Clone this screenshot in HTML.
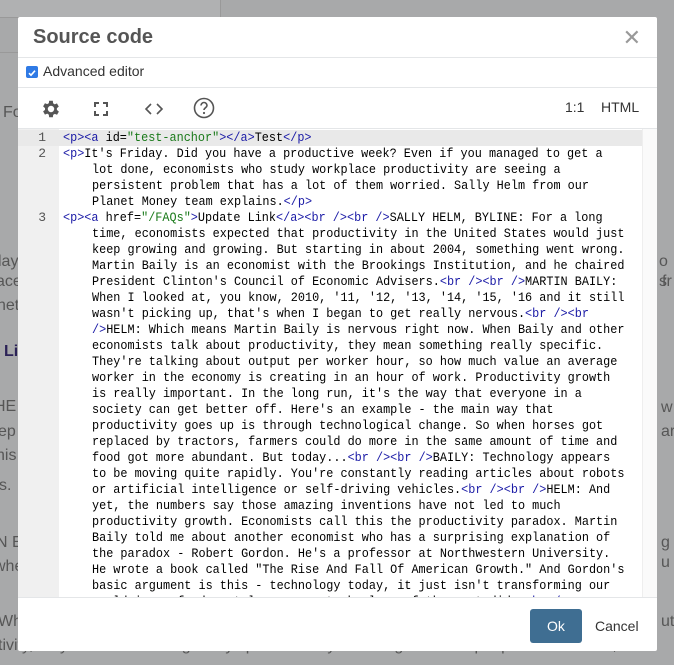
<!DOCTYPE html>
<html><head><meta charset="utf-8"><style>
body{margin:0;width:674px;height:665px;background:#a8a9aa;position:relative;overflow:hidden;font-family:"Liberation Sans",sans-serif}
.bg{position:absolute;color:#565656;font-size:16px;line-height:20px}
.modal{position:absolute;left:18px;top:17px;width:639px;height:634px;background:#fff;border-radius:2px}
.hdr{position:absolute;left:0;top:0;width:100%;height:40px;border-bottom:1px solid #e4e6e8}
.hdr h1{margin:0;position:absolute;left:15px;top:9px;font-size:20px;font-weight:bold;color:#555}
.x{position:absolute;right:16px;top:8px;font-size:22px;color:#999}
.chk{position:absolute;top:41px;left:0;width:100%;height:29px;border-bottom:1px solid #e4e6e8;font-size:14px;color:#333}
.cb{position:absolute;left:8px;top:8px;width:12px;height:12px;background:#2f7ae5;border-radius:2px}
.tb{position:absolute;top:71px;left:0;width:100%;height:40px;border-bottom:1px solid #e4e6e8}
.code{position:absolute;top:112px;left:0;width:639px;height:468px;overflow:hidden;background:#fff}
.gut{position:absolute;left:0;top:0;width:41px;height:100%;background:#f0f0f0}
.sb{position:absolute;right:0;top:0;width:14px;height:100%;background:#fafafa;border-left:1px solid #eee}
.lines{position:absolute;left:0;top:1px;font-family:"Liberation Mono",monospace;font-size:13px;line-height:16px;color:#000;white-space:pre}
.ln{position:absolute;left:0;width:28px;text-align:right;color:#555}
.l,.c{position:absolute;transform:scaleX(0.91);transform-origin:0 0}
.l{left:45px}
.c{left:74px}
.t{color:#1a1aa6}.s{color:#1a7a1a}
.ftr{position:absolute;top:580px;left:0;width:100%;height:54px;border-top:1px solid #e4e6e8}
.ok{position:absolute;left:512px;top:11px;width:52px;height:34px;background:#3f6e92;color:#fff;border-radius:3px;font-size:14px;text-align:center;line-height:34px}
.cancel{position:absolute;left:577px;top:20px;font-size:14px;color:#333}
</style></head><body>
<div style="position:absolute;left:0;top:0;width:220px;height:17px;background:#b0b1b2;border-right:1px solid #999;border-bottom:1px solid #999"></div>
<div style="position:absolute;left:0;top:52px;width:18px;height:1px;background:#999"></div>
<div class="bg" style="left:3px;top:103px">Fo</div>
<div class="bg" style="left:-2px;top:252px">lay</div>
<div class="bg" style="left:-4px;top:272px">ace</div>
<div class="bg" style="left:-3px;top:296px">net</div>
<div class="bg" style="left:4px;top:342px;color:#2b2257;font-weight:bold">Li</div>
<div class="bg" style="left:-6px;top:397px">HE</div>
<div class="bg" style="left:-2px;top:422px">ep</div>
<div class="bg" style="left:-4px;top:446px">his</div>
<div class="bg" style="left:-1px;top:476px">s.</div>
<div class="bg" style="left:-4px;top:533px">N E</div>
<div class="bg" style="left:-6px;top:557px">whe</div>
<div class="bg" style="left:-2px;top:612px">Wh</div>
<div class="bg" style="left:-2px;top:636px">tivity, they mean something really specific. They're talking about output per worker hour, so h</div>
<div class="bg" style="left:659px;top:252px">o s</div>
<div class="bg" style="left:662px;top:272px">fr</div>
<div class="bg" style="left:661px;top:398px">w</div>
<div class="bg" style="left:661px;top:422px">ar</div>
<div class="bg" style="left:661px;top:533px">g u</div>
<div class="bg" style="left:661px;top:612px">ut</div>

<div class="modal">
 <div class="hdr"><h1>Source code</h1><div class="x">✕</div></div>
 <div class="chk"><div class="cb"><svg width="12" height="12" viewBox="0 0 12 12"><path d="M3 6.2l2 2 4-4.5" stroke="#fff" stroke-width="1.6" fill="none"/></svg></div><span style="position:absolute;left:25px;top:5px">Advanced editor</span></div>
 <div class="tb">
  <svg style="position:absolute;left:22px;top:10px" width="22" height="22" viewBox="0 0 24 24"><path fill="#555" d="M19.4 13a7.5 7.5 0 000-2l2.1-1.6-2-3.5-2.5 1a7.6 7.6 0 00-1.7-1L15 3h-4l-.4 2.7a7.6 7.6 0 00-1.7 1l-2.5-1-2 3.5L6.5 11a7.5 7.5 0 000 2l-2.1 1.6 2 3.5 2.5-1a7.6 7.6 0 001.7 1L11 21h4l.4-2.7a7.6 7.6 0 001.7-1l2.5 1 2-3.5zM13 15.5a3.5 3.5 0 110-7 3.5 3.5 0 010 7z" transform="translate(-1 0)"/></svg>
  <svg style="position:absolute;left:75px;top:13px" width="16" height="16" viewBox="0 0 16 16"><path d="M2 6V2h4M10 2h4v4M14 10v4h-4M6 14H2v-4" stroke="#555" stroke-width="2" fill="none"/></svg>
  <svg style="position:absolute;left:126px;top:13px" width="20" height="16" viewBox="0 0 20 16"><path d="M7 3L2 8l5 5M13 3l5 5-5 5" stroke="#555" stroke-width="1.6" fill="none"/></svg>
  <svg style="position:absolute;left:175px;top:9px" width="22" height="22" viewBox="0 0 22 22"><circle cx="11" cy="11" r="9.5" stroke="#555" stroke-width="1.6" fill="none"/><path d="M8 8.5a3 3 0 116 0c0 2-3 2.2-3 4.5" stroke="#555" stroke-width="1.6" fill="none"/><circle cx="11" cy="16" r="1.1" fill="#555"/></svg>
  <span style="position:absolute;left:547px;top:11px;font-size:14px;color:#333">1:1</span>
  <span style="position:absolute;left:583px;top:11px;font-size:14px;color:#333">HTML</span>
 </div>
 <div class="code">
  <div class="gut"></div><div class="sb"></div>
  <div style="position:absolute;left:0;top:1px;width:624px;height:16px;background:#e9e9e9"></div>
  <div class="lines">
<div class="ln" style="top:0">1</div><div class="ln" style="top:16px">2</div><div class="ln" style="top:80px">3</div>
<div class="l" style="top:0"><span class="t">&lt;p&gt;&lt;a</span> id=<span class="s">"test-anchor"</span><span class="t">&gt;&lt;/a&gt;</span>Test<span class="t">&lt;/p&gt;</span></div>
<div class="l" style="top:16px"><span class="t">&lt;p&gt;</span>It's Friday. Did you have a productive week? Even if you managed to get a</div>
<div class="c" style="top:32px">lot done, economists who study workplace productivity are seeing a</div>
<div class="c" style="top:48px">persistent problem that has a lot of them worried. Sally Helm from our</div>
<div class="c" style="top:64px">Planet Money team explains.<span class="t">&lt;/p&gt;</span></div>
<div class="l" style="top:80px"><span class="t">&lt;p&gt;&lt;a</span> href=<span class="s">"/FAQs"</span><span class="t">&gt;</span>Update Link<span class="t">&lt;/a&gt;&lt;br /&gt;&lt;br /&gt;</span>SALLY HELM, BYLINE: For a long</div>
<div class="c" style="top:96px">time, economists expected that productivity in the United States would just</div>
<div class="c" style="top:112px">keep growing and growing. But starting in about 2004, something went wrong.</div>
<div class="c" style="top:128px">Martin Baily is an economist with the Brookings Institution, and he chaired</div>
<div class="c" style="top:144px">President Clinton's Council of Economic Advisers.<span class="t">&lt;br /&gt;&lt;br /&gt;</span>MARTIN BAILY:</div>
<div class="c" style="top:160px">When I looked at, you know, 2010, '11, '12, '13, '14, '15, '16 and it still</div>
<div class="c" style="top:176px">wasn't picking up, that's when I began to get really nervous.<span class="t">&lt;br /&gt;&lt;br</span></div>
<div class="c" style="top:192px"><span class="t">/&gt;</span>HELM: Which means Martin Baily is nervous right now. When Baily and other</div>
<div class="c" style="top:208px">economists talk about productivity, they mean something really specific.</div>
<div class="c" style="top:224px">They're talking about output per worker hour, so how much value an average</div>
<div class="c" style="top:240px">worker in the economy is creating in an hour of work. Productivity growth</div>
<div class="c" style="top:256px">is really important. In the long run, it's the way that everyone in a</div>
<div class="c" style="top:272px">society can get better off. Here's an example - the main way that</div>
<div class="c" style="top:288px">productivity goes up is through technological change. So when horses got</div>
<div class="c" style="top:304px">replaced by tractors, farmers could do more in the same amount of time and</div>
<div class="c" style="top:320px">food got more abundant. But today...<span class="t">&lt;br /&gt;&lt;br /&gt;</span>BAILY: Technology appears</div>
<div class="c" style="top:336px">to be moving quite rapidly. You're constantly reading articles about robots</div>
<div class="c" style="top:352px">or artificial intelligence or self-driving vehicles.<span class="t">&lt;br /&gt;&lt;br /&gt;</span>HELM: And</div>
<div class="c" style="top:368px">yet, the numbers say those amazing inventions have not led to much</div>
<div class="c" style="top:384px">productivity growth. Economists call this the productivity paradox. Martin</div>
<div class="c" style="top:400px">Baily told me about another economist who has a surprising explanation of</div>
<div class="c" style="top:416px">the paradox - Robert Gordon. He's a professor at Northwestern University.</div>
<div class="c" style="top:432px">He wrote a book called "The Rise And Fall Of American Growth." And Gordon's</div>
<div class="c" style="top:448px">basic argument is this - technology today, it just isn't transforming our</div>
<div class="c" style="top:464px">world in as fundamental a way as technology of the past did. <span class="t">&lt;br /&gt;</span></div>
  </div>
 </div>
 <div class="ftr"><div class="ok">Ok</div><div class="cancel">Cancel</div></div>
</div>
</body></html>
